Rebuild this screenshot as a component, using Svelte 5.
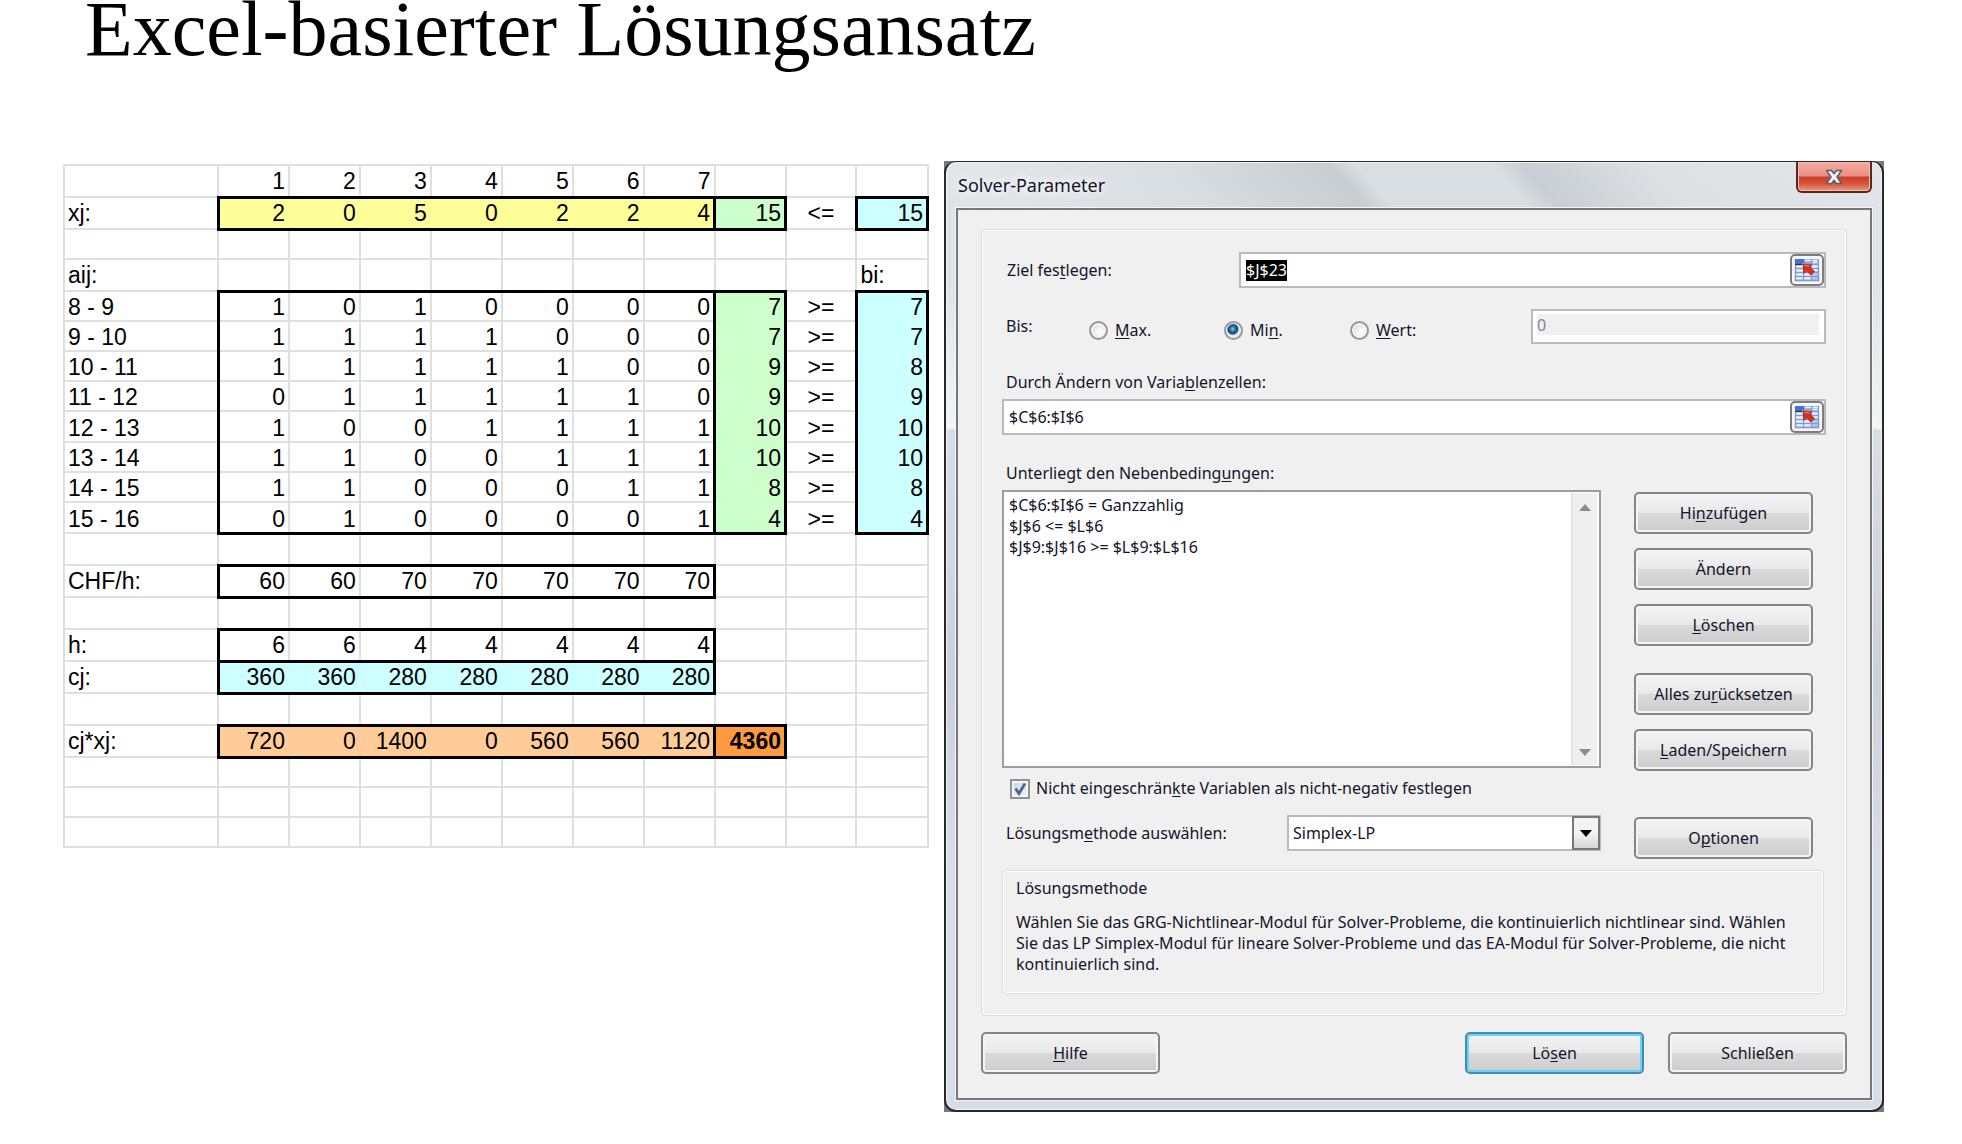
<script>
  import { onMount } from 'svelte';

  const nums = (a) => a.map((v) => ({ v, c: 'num' }));
  const blanks = (n) => Array.from({ length: n }, () => ({ v: '', c: '' }));

  // A run of cells framed as one box; top and bottom can be left open.
  function run(values, cls, { top = true, bottom = true } = {}) {
    return values.map((v, i) => ({
      v,
      c: ['num', cls, top ? 'bt' : '', bottom ? 'bb' : '', i === 0 ? 'bl' : '', i === values.length - 1 ? 'br' : ''].join(' ')
    }));
  }

  const coverage = [
    ['8 - 9', [1, 0, 1, 0, 0, 0, 0], 7, 7],
    ['9 - 10', [1, 1, 1, 1, 0, 0, 0], 7, 7],
    ['10 - 11', [1, 1, 1, 1, 1, 0, 0], 9, 8],
    ['11 - 12', [0, 1, 1, 1, 1, 1, 0], 9, 9],
    ['12 - 13', [1, 0, 0, 1, 1, 1, 1], 10, 10],
    ['13 - 14', [1, 1, 0, 0, 1, 1, 1], 10, 10],
    ['14 - 15', [1, 1, 0, 0, 0, 1, 1], 8, 8],
    ['15 - 16', [0, 1, 0, 0, 0, 0, 1], 4, 4]
  ];

  const rows = [
    { label: '', cells: [...nums([1, 2, 3, 4, 5, 6, 7]), ...blanks(3)] },
    {
      label: 'xj:',
      cells: [...run([2, 0, 5, 0, 2, 2, 4], 'yellow'), ...run([15], 'green'), { v: '<=', c: 'op' }, ...run([15], 'cyan')]
    },
    { label: '', size: 'low', cells: blanks(10) },
    { label: 'aij:', cells: [...blanks(9), { v: 'bi:', c: 'txt' }] },
    ...coverage.map(([label, a, sum, need], i) => {
      const edge = { top: i === 0, bottom: i === coverage.length - 1 };
      return {
        label,
        size: i === 4 || i === 7 ? 'mid' : 'low',
        cells: [...run(a, '', edge), ...run([sum], 'green', edge), { v: '>=', c: 'op' }, ...run([need], 'cyan', edge)]
      };
    }),
    { label: '', cells: blanks(10) },
    { label: 'CHF/h:', cells: [...run([60, 60, 70, 70, 70, 70, 70], ''), ...blanks(3)] },
    { label: '', cells: blanks(10) },
    { label: 'h:', cells: [...run([6, 6, 4, 4, 4, 4, 4], ''), ...blanks(3)] },
    { label: 'cj:', cells: [...run([360, 360, 280, 280, 280, 280, 280], 'cyan'), ...blanks(3)] },
    { label: '', cells: blanks(10) },
    { label: 'cj*xj:', cells: [...run([720, 0, 1400, 0, 560, 560, 1120], 'peach'), ...run([4360], 'orange'), ...blanks(2)] },
    { label: '', size: 'low', cells: blanks(10) },
    { label: '', size: 'low', cells: blanks(10) },
    { label: '', size: 'low', cells: blanks(10) }
  ];

  let target = $state('$J$23');
  let goal = $state('min');
  let goalValue = $state('0');
  let variables = $state('$C$6:$I$6');
  let nonNegative = $state(true);
  let method = $state('Simplex-LP');
  const constraints = ['$C$6:$I$6 = Ganzzahlig', '$J$6 <= $L$6', '$J$9:$J$16 >= $L$9:$L$16'];

  let targetInput;
  onMount(() => {
    targetInput.focus({ preventScroll: true });
    targetInput.select();
  });
</script>

{#snippet refIcon()}
  <svg viewBox="0 0 24 22" width="24" height="22" aria-hidden="true">
    <rect width="24" height="22" fill="#8aa6dc" />
    <rect x="1" y="5" width="22" height="16" fill="#eef3fc" />
    <rect x="17" y="12" width="7" height="9" fill="#b9cbf1" />
    <path d="M0 5.5h24M0 9.5h24M0 13.5h24M0 17.5h24M0 21.2h24" stroke="#7f9cd2" stroke-width="1.3" />
    <path d="M8.5 5v17M16.5 0v22M23.4 0v22M.6 5v17" stroke="#7f9cd2" stroke-width="1.2" />
    <path d="M10 1.5h6M17.5 1.5h5M17.5 3.5h5" stroke="#f2f6ff" stroke-width="1.6" />
    <rect width="9" height="4" fill="#3f74da" />
    <path d="M0 5.3h7" stroke="#25334f" stroke-width="1.6" />
    <path d="M8 5l9 1-2 2 4.500 4.500-3.500 3.500-4.500-4-2.500 2.500z" fill="#d9301c" stroke="#b3261a" stroke-width=".8" />
    <path d="M9.500 6.300l5 .6" stroke="#f08a78" stroke-width="1" />
  </svg>
{/snippet}

<main>
  <h1>Excel-basierter Lösungsansatz</h1>

  <div class="columns">
    <table>
      <colgroup>
        <col class="first" />
        {#each Array(10) as _}<col />{/each}
      </colgroup>
      <tbody>
        {#each rows as row}
          <tr class={row.size}>
            <th scope="row">{row.label}</th>
            {#each row.cells as cell}<td class={cell.c}>{cell.v}</td>{/each}
          </tr>
        {/each}
      </tbody>
    </table>

    <div class="shadow">
      <section class="window" role="dialog" aria-labelledby="title">
        <header>
          <h2 id="title">Solver-Parameter</h2>
          <button class="close" type="button" aria-label="Schließen">
            <svg viewBox="0 0 18 16" width="18" height="16" aria-hidden="true">
              <path d="M1.500 1.500h5L9 4.700l2.500-3.200h5L12 8l4.500 6.500h-5L9 11.300l-2.500 3.200h-5L6 8z" fill="#f4f4f6" stroke="#5d5f70" stroke-width="1.500" stroke-linejoin="round" />
            </svg>
          </button>
        </header>

        <form class="client" onsubmit={(e) => e.preventDefault()}>
          <div class="group">
            <div class="row target">
              <label for="target">Ziel fes<u>t</u>legen:</label>
              <div class="ref">
                <input id="target" type="text" bind:value={target} bind:this={targetInput} />
                <button type="button" aria-label="Zielzelle wählen">{@render refIcon()}</button>
              </div>
            </div>

            <div class="row goal">
              <span class="caption">Bis:</span>
              <div class="radios">
                <label><input type="radio" name="goal" value="max" bind:group={goal} /><span><u>M</u>ax.</span></label>
                <label><input type="radio" name="goal" value="min" bind:group={goal} /><span>Mi<u>n</u>.</span></label>
                <label><input type="radio" name="goal" value="value" bind:group={goal} /><span><u>W</u>ert:</span></label>
              </div>
              <input class="value" type="text" aria-label="Wert" bind:value={goalValue} disabled={goal !== 'value'} />
            </div>

            <label class="above" for="variables">Durch Ändern von Varia<u>b</u>lenzellen:</label>
            <div class="ref">
              <input id="variables" type="text" bind:value={variables} />
              <button type="button" aria-label="Variablenzellen wählen">{@render refIcon()}</button>
            </div>

            <label class="above" for="constraints">Unterliegt den Nebenbeding<u>u</u>ngen:</label>
            <div class="split">
              <div class="left">
                <div class="list">
                  <select id="constraints" size="12">
                    {#each constraints as c}<option>{c}</option>{/each}
                  </select>
                  <div class="scroll">
                    <svg viewBox="0 0 12 7" width="12" height="7" aria-hidden="true"><path d="M0 7L6 0l6 7z" fill="#8c8c8c" /></svg>
                    <svg viewBox="0 0 12 7" width="12" height="7" aria-hidden="true"><path d="M0 0h12L6 7z" fill="#8c8c8c" /></svg>
                  </div>
                </div>

                <label class="check">
                  <input type="checkbox" bind:checked={nonNegative} />
                  <svg viewBox="0 0 20 20" width="20" height="20" aria-hidden="true">
                    {#if nonNegative}<path d="M5.500 9.500l3.500 5 6-10" fill="none" stroke="#4a62a4" stroke-width="2.800" />{/if}
                  </svg>
                  <span>Nicht eingeschrän<u>k</u>te Variablen als nicht-negativ festlegen</span>
                </label>

                <div class="row method">
                  <label for="method">Lösungsm<u>e</u>thode auswählen:</label>
                  <div class="combo">
                    <select id="method" bind:value={method}>
                      <option>GRG-Nichtlinear</option>
                      <option>Simplex-LP</option>
                      <option>EA</option>
                    </select>
                    <span class="arrow">
                      <svg viewBox="0 0 12 7" width="12" height="7" aria-hidden="true"><path d="M0 0h12L6 7z" fill="#000" /></svg>
                    </span>
                  </div>
                </div>
              </div>

              <div class="actions">
                <button type="button">Hi<u>n</u>zufügen</button>
                <button type="button">Ändern</button>
                <button type="button"><u>L</u>öschen</button>
                <button type="button" class="apart">Alles zu<u>r</u>ücksetzen</button>
                <button type="button"><u>L</u>aden/Speichern</button>
                <button type="button" class="last">O<u>p</u>tionen</button>
              </div>
            </div>

            <div class="group info">
              <h3>Lösungsmethode</h3>
              <p>
                Wählen Sie das GRG-Nichtlinear-Modul für Solver-Probleme, die kontinuierlich nichtlinear sind. Wählen<br />
                Sie das LP Simplex-Modul für lineare Solver-Probleme und das EA-Modul für Solver-Probleme, die nicht<br />
                kontinuierlich sind.
              </p>
            </div>
          </div>

          <footer>
            <button type="button" class="help"><u>H</u>ilfe</button>
            <button type="submit" class="default">Lö<u>s</u>en</button>
            <button type="button">Schließen</button>
          </footer>
        </form>
      </section>
    </div>
  </div>
</main>

<style>
  :global(body) {
    background: #fff;
  }
  * {
    box-sizing: border-box;
  }
  main {
    padding: 0 78px 32px 63px;
    color: #000;
  }
  h1 {
    margin: 0 0 103px 22px;
    font: 400 78px/58px 'Liberation Serif', 'Times New Roman', serif;
    white-space: nowrap;
  }
  .columns {
    display: grid;
    grid-template-columns: 866fr 940fr;
    column-gap: 15px;
    align-items: start;
  }

  /* Spreadsheet */
  table {
    width: 100%;
    margin-top: 3px;
    border-collapse: collapse;
    table-layout: fixed;
    font: 23px/26px 'Liberation Sans', Arial, sans-serif;
  }
  .first {
    width: 154px;
  }
  th,
  td {
    height: 32px;
    padding: 0 3px 2px;
    border: 2px solid #dedfe1;
    vertical-align: bottom;
    font-weight: 400;
    text-align: left;
    white-space: nowrap;
  }
  .low > *,
  .mid > * {
    padding-bottom: 0;
  }
  .low > * {
    height: 30px;
  }
  .mid > * {
    height: 31px;
  }
  .num {
    text-align: right;
  }
  .op {
    text-align: center;
  }
  .yellow,
  .green,
  .cyan,
  .peach,
  .orange {
    border-color: transparent;
  }
  .yellow {
    background: #ffff99;
  }
  .green {
    background: #ccffcc;
  }
  .cyan {
    background: #ccffff;
  }
  .peach {
    background: #ffcc99;
  }
  .orange {
    background: #ff9a40;
    font-weight: 700;
  }
  .bt {
    border-top: 3px solid #000;
  }
  .bb {
    border-bottom: 3px solid #000;
  }
  .bl {
    border-left: 3px solid #000;
  }
  .br {
    border-right: 3px solid #000;
  }

  /* Window frame */
  .shadow {
    background: #77797d;
  }
  .window {
    padding: 0 10px 10px;
    border: 2px solid #26282b;
    border-top-width: 1px;
    border-radius: 12px;
    background:
      linear-gradient(
          49deg,
          transparent 60px,
          #d8dde1 200px,
          #c8cdd2 318px,
          #d9dee2 338px,
          #d9dee2 440px,
          #c9ced5 464px,
          #dde1e4 560px,
          transparent 700px
        )
        0 0 / 100% 46px no-repeat,
      linear-gradient(#e2e6e9 0, #dfe3e7 46px, #dfe3e8 120px, #f3f4f6 266px, #d8dee4 268px, #cbd1d7 520px, #d8dee5 700px, #d8dee5 100%);
    box-shadow: inset 0 0 0 1px #f0f3f5;
    color: #14142a;
    font: 16px/21px 'Noto Sans', 'Open Sans', sans-serif;
  }
  header {
    display: flex;
    justify-content: space-between;
    align-items: flex-start;
    height: 46px;
  }
  h2 {
    margin: 11px 0 0 2px;
    font: 400 18px/24px 'Noto Sans', 'Open Sans', sans-serif;
    text-shadow: 0 0 12px #fff, 0 0 12px #fff, 0 0 20px #fff;
  }
  .close {
    display: flex;
    align-items: center;
    justify-content: center;
    width: 76px;
    height: 31px;
    padding: 0;
    border: 2px solid #562822;
    border-top: 0;
    border-radius: 0 0 6px 6px;
    background: linear-gradient(#f4aaa0, #e88f83 48%, #c93d27 52%, #d5563c 75%, #ea9a7c);
    box-shadow: inset 0 0 0 1px #f5bdb2;
  }
  .client {
    padding: 19px 23px 24px;
    border: 2px solid #75777a;
    background: #f0f0f0;
    box-shadow: 0 0 0 1px #f3f5f7;
  }
  .group {
    padding: 22px 20px 21px;
    border: 1px solid #d5dfe5;
    border-radius: 4px;
    box-shadow: inset 0 0 0 1px #fff;
  }

  /* Fields */
  input,
  select,
  button {
    margin: 0;
    color: inherit;
    font: inherit;
    outline: none;
  }
  u {
    text-decoration-thickness: 1px;
    text-underline-offset: 2px;
  }
  .row {
    display: flex;
    align-items: center;
  }
  .target > label {
    flex: 0 0 237px;
    padding-left: 5px;
  }
  .ref {
    display: flex;
    flex: 1;
    height: 36px;
    border: 2px solid #b9babf;
    background: #fff;
  }
  .ref input {
    flex: 1;
    min-width: 0;
    padding: 0 5px;
    border: 0;
    background: transparent;
    line-height: 21px;
  }
  .ref input::selection {
    background: #000;
    color: #fff;
  }
  .ref button {
    display: flex;
    align-items: center;
    justify-content: center;
    width: 34px;
    padding: 0;
    border: 2px solid #7d7d7f;
    border-radius: 5px;
    background: linear-gradient(#fafafa, #d4d4d4);
    box-shadow: inset 0 0 0 2px #f6f6f6;
  }
  .goal {
    margin-top: 21px;
  }
  .caption {
    flex: 0 0 87px;
    padding-left: 4px;
  }
  .radios {
    display: flex;
    flex: 1;
    padding-top: 8px;
  }
  .radios label {
    display: flex;
    align-items: center;
    gap: 7px;
    width: 135px;
  }
  .radios label + label {
    width: 126px;
  }
  .radios input {
    appearance: none;
    width: 19px;
    height: 19px;
    border: 2px solid #98999b;
    border-radius: 50%;
    background: radial-gradient(circle at 60% 60%, #fbfbfc 20%, #d3d5d8 75%);
    box-shadow: inset 0 0 0 2px #f4f4f4;
  }
  .radios input:checked {
    background: radial-gradient(circle at 45% 40%, #8fd6f3 0, #2b86b8 2px, #153f63 5px, #dfe3e6 6px);
    box-shadow: inset 0 0 0 1px #f4f4f4;
  }
  .value {
    width: 295px;
    height: 35px;
    padding: 3px 5px 7px 4px;
    border: 2px solid #b9babf;
    background: linear-gradient(#f0f0f0, #f0f0f0) content-box, #fff;
    color: #85858f;
  }
  .above {
    display: block;
    margin-top: 28px;
    padding: 0 4px 6px;
  }
  .split {
    display: flex;
    gap: 33px;
    padding-right: 13px;
  }
  .left {
    flex: 1;
  }
  .list {
    display: flex;
    height: 278px;
    border: 2px solid #9a9da3;
    background: #fff;
  }
  .list select {
    flex: 1;
    padding: 2px 5px;
    border: 0;
    background: transparent;
    overflow: hidden;
  }
  .list option {
    height: 21px;
    min-height: 0;
    padding: 0;
    line-height: 21px;
  }
  .scroll {
    display: flex;
    flex-direction: column;
    align-items: center;
    justify-content: space-between;
    width: 26px;
    margin: 1px 2px;
    padding: 11px 0 9px;
    border-left: 2px solid #e3e3e3;
    background: #efefef;
  }
  .check {
    display: grid;
    grid-template-columns: 20px 1fr;
    column-gap: 6px;
    align-items: center;
    margin: 10px 0 16px 8px;
  }
  .check input {
    grid-area: 1 / 1;
    appearance: none;
    width: 20px;
    height: 20px;
    border: 2px solid #929396;
    background: linear-gradient(135deg, #cdd2d9, #f4f5f6);
    box-shadow: inset 0 0 0 2px #f4f4f4;
  }
  .check svg {
    grid-area: 1 / 1;
    pointer-events: none;
  }
  .method > label {
    flex: 1;
    padding-left: 4px;
  }
  .combo {
    position: relative;
    width: 314px;
  }
  .combo select {
    appearance: none;
    width: 100%;
    height: 36px;
    padding: 0 32px 0 4px;
    border: 2px solid #b9babf;
    border-radius: 0;
    background: #fff;
  }
  .arrow {
    position: absolute;
    inset: 1px 1px 1px auto;
    display: flex;
    align-items: center;
    justify-content: center;
    width: 28px;
    border: 2px solid #77787a;
    background: linear-gradient(#f3f3f3 50%, #d6d6d6);
    pointer-events: none;
  }

  /* Push buttons */
  .actions {
    display: flex;
    flex-direction: column;
    gap: 14px;
    padding-top: 2px;
  }
  .actions button,
  footer button {
    width: 179px;
    height: 42px;
    padding: 0;
    border: 2px solid #868686;
    border-radius: 5px;
    background: linear-gradient(#f3f3f3, #e9e9e9 49%, #dadada 51%, #cccccc);
    box-shadow: inset 0 0 0 2px #f4f4f4;
  }
  .actions .apart {
    margin-top: 13px;
  }
  .actions .last {
    margin-top: 32px;
  }
  .info {
    margin-top: 11px;
    margin-right: 2px;
    padding: 7px 12px 18px 13px;
  }
  h3,
  p {
    margin: 0;
    font: inherit;
    white-space: nowrap;
  }
  p {
    margin-top: 13px;
  }
  footer {
    display: flex;
    gap: 24px;
    margin-top: 16px;
  }
  .help {
    margin-right: auto;
  }
  footer .default {
    border-color: #3e8fb8;
    box-shadow: inset 0 0 0 2px #6bd2f3;
  }
</style>
